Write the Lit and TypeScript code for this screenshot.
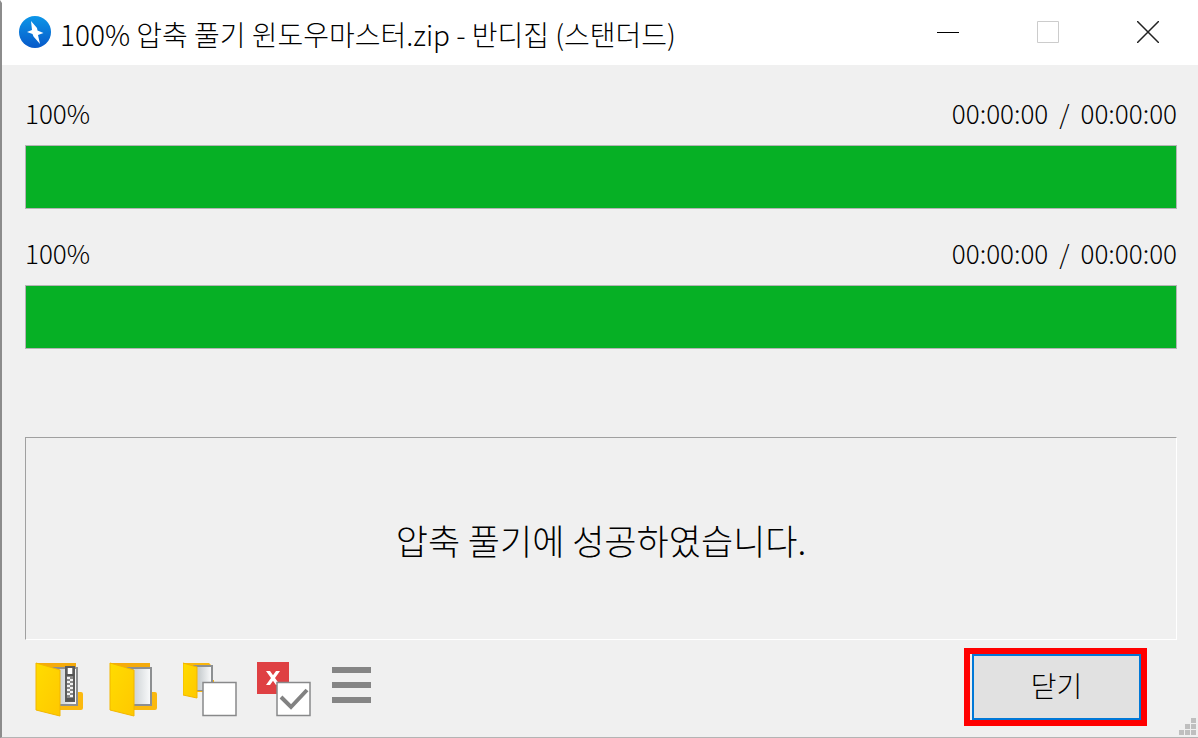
import { LitElement, html, css, svg } from "lit";
import { customElement, property } from "lit/decorators.js";

@customElement("progress-row")
class ProgressRow extends LitElement {
  @property({ type: Number }) value = 0;
  @property() elapsed = "";
  @property() total = "";

  static styles = css`
    :host { display: block; }
    .labels {
      display: flex;
      justify-content: space-between;
      height: 40px;
      line-height: 36px;
      font-size: 26px;
      margin-bottom: 10px;
    }
    .times { display: flex; gap: 11px; }
    .bar {
      display: block;
      appearance: none;
      box-sizing: border-box;
      width: 100%;
      height: 64px;
      border: 1px solid #b4b4b4;
      background: #e6e6e6;
    }
    .bar::-webkit-progress-bar { background: #e6e6e6; }
    .bar::-webkit-progress-value { background: #06b025; }
  `;

  render() {
    return html`
      <div class="labels">
        <label for="bar">${this.value}%</label>
        <div class="times"><span>${this.elapsed}</span><span>/</span><span>${this.total}</span></div>
      </div>
      <progress id="bar" class="bar" max="100" .value=${this.value}></progress>
    `;
  }
}

const folder = (content: unknown) => svg`
  <path d="M1 1h40v38h6a1 1 0 0 1 1 1v6H25z" fill="#f5ab0c"/>
  <path d="M41 30h5q2 0 2 2v14q0 2-2 2H24v-6h17z" fill="#fbb90f"/>
  <path d="M14 5h29v39H22z" fill="#8d8f91"/>
  <path d="M15 7h26v35H22z" fill="url(#paper)"/>
  ${content}
  <path d="M1 1 25 8v46L1 48z" fill="url(#cover)" stroke="#f2b600" stroke-width="1"/>
`;

const defs = svg`
  <defs>
    <linearGradient id="paper"><stop offset=".3" stop-color="#c9ced1"/><stop offset="1" stop-color="#f8f9fa"/></linearGradient>
    <linearGradient id="cover" x1="0" y1="0" x2="1" y2="1"><stop stop-color="#ffdc00"/><stop offset="1" stop-color="#ffc800"/></linearGradient>
  </defs>`;

const zipper = svg`
  <path d="M31 5h8v34h-8z" fill="#8a8a8a" stroke="#5b5b5b" stroke-width="2"/>
  <path d="M33 6h4v6h-4z" fill="#fff"/>
  <path d="M31 13h8" stroke="#555" stroke-width="2"/>
  <path d="M33.500 15v20" stroke="#f2f2f2" stroke-width="3" stroke-dasharray="2 2"/>
  <path d="M36.500 15v20" stroke="#f2f2f2" stroke-width="3" stroke-dasharray="2 2" stroke-dashoffset="2"/>
  <path d="M31 36h8v3h-8z" fill="#555"/>
`;

const tools = [
  {
    label: "압축 파일 열기",
    art: svg`<svg viewBox="0 0 56 56">${defs}${folder(zipper)}</svg>`,
  },
  {
    label: "폴더 열기",
    art: svg`<svg viewBox="0 0 56 56">${defs}${folder(null)}</svg>`,
  },
  {
    label: "완료 후 폴더 열기",
    art: svg`<svg viewBox="0 0 56 56">${defs}
      <path d="M0 1h26l2 2v15h3v12H14z" fill="#f9b60e"/>
      <path d="M10 3h20v26H14z" fill="#8d9092"/><path d="M11 5h17v23H14z" fill="url(#paper)"/>
      <path d="M0 1l14 4v31L0 33z" fill="url(#cover)" stroke="#f3b500"/>
      <rect x="20" y="20.500" width="33" height="33" fill="#fff" stroke="#88898a" stroke-width="1.500"/></svg>`,
  },
  {
    label: "완료 후 창 닫기",
    art: svg`<svg viewBox="0 0 56 56">
      <path d="M0 0h32v32H0z" fill="#df4043"/>
      <path d="M9 9h4l10 14h-4zM19 9h4L13 23H9z" fill="#fff"/>
      <rect x="20" y="20.500" width="33" height="33" fill="#fff" stroke="#88898a" stroke-width="1.500"/>
      <path d="M24 35l10 10 16-17" fill="none" stroke="#828282" stroke-width="4"/></svg>`,
  },
  {
    label: "메뉴",
    art: svg`<svg viewBox="0 0 56 56"><path d="M1 8h39M1 23h39M1 38h39" stroke="#858585" stroke-width="6"/></svg>`,
  },
];

@customElement("app-root")
class AppRoot extends LitElement {
  static styles = css`
    :host {
      display: block;
      color: #000;
      font-family: "Noto Sans CJK KR", sans-serif;
      font-weight: 300;
    }
    .window {
      box-sizing: border-box;
      min-height: 100vh;
      display: flex;
      flex-direction: column;
      position: relative;
      background: #f0f0f0;
      border-top: 3px solid #fff;
      border-left: 2px solid #8c8c8c;
      border-bottom: 1px solid #b4b4b4;
    }
    button { font: inherit; color: inherit; padding: 0; border: 0; background: none; }
    svg { display: block; }
    .titlebar {
      display: flex;
      align-items: center;
      box-sizing: border-box;
      height: 62px;
      padding: 0 0 4px 17px;
      background: #fff;
    }
    .logo { width: 32px; height: 32px; margin-right: 9px; }
    .title {
      flex: 1;
      margin: 0;
      padding-top: 4px;
      font-size: 28px;
      font-weight: 300;
      line-height: 32px;
      white-space: nowrap;
    }
    .caption { width: 100px; height: 58px; display: grid; place-items: center; }
    .caption svg { width: 22px; height: 22px; }
    .content {
      flex: 1;
      display: flex;
      flex-direction: column;
      padding: 30px 21px 0 23px;
    }
    .rows { display: grid; gap: 26px; }
    .result {
      flex: 1;
      display: grid;
      place-items: center;
      box-sizing: border-box;
      margin: 88px 0 0;
      padding-top: 2px;
      border: 1px solid #a0a0a0;
      border-right-color: #fff;
      border-bottom-color: #fff;
      font-size: 35px;
      line-height: 44px;
    }
    .footer {
      display: flex;
      align-items: flex-start;
      justify-content: space-between;
      padding: 8px 30px 11px 10px;
    }
    .tools { display: flex; gap: 18px; padding-top: 14px; }
    .tools svg { width: 56px; height: 56px; }
    .highlight { border: 6px solid #f00; padding-left: 2px; background: #f0f0f0; }
    .close {
      display: block;
      box-sizing: border-box;
      width: 169px;
      height: 66px;
      padding-bottom: 4px;
      border: 2px solid #0078d7;
      background: #e1e1e1;
      font-size: 28px;
    }
    .grip { position: absolute; right: 2px; bottom: 2px; width: 17px; height: 17px; }
  `;

  render() {
    return html`
      <main class="window">
        <header class="titlebar">
          <svg class="logo" viewBox="0 0 32 32" aria-hidden="true">
            <defs><linearGradient id="blue" x2="0" y2="1"><stop stop-color="#0c96e8"/><stop offset="1" stop-color="#0759c9"/></linearGradient></defs>
            <circle cx="16" cy="16" r="16" fill="url(#blue)"/>
            <path d="M12 5 18 12 18.500 14.500 24.500 17 19 19 21 28 14.500 20.500 13.500 18 8 16 13 14z" fill="#fff"/>
          </svg>
          <h1 class="title">100% 압축 풀기 윈도우마스터.zip - 반디집 (스탠더드)</h1>
          <button class="caption" aria-label="최소화"><svg viewBox="0 0 22 22"><path d="M0 11.500h22" stroke="#000"/></svg></button>
          <button class="caption" aria-label="최대화" disabled><svg viewBox="0 0 22 22"><path d="M.5.5h21v21H.5z" fill="none" stroke="#ccc"/></svg></button>
          <button class="caption" aria-label="창 닫기"><svg viewBox="0 0 22 22"><path d="M0 0l22 22M22 0L0 22" stroke="#222" stroke-width="1.500"/></svg></button>
        </header>
        <div class="content">
          <div class="rows">
            <progress-row value="100" elapsed="00:00:00" total="00:00:00"></progress-row>
            <progress-row value="100" elapsed="00:00:00" total="00:00:00"></progress-row>
          </div>
          <p class="result" role="status">압축 풀기에 성공하였습니다.</p>
          <footer class="footer">
            <div class="tools">
              ${tools.map((t) => html`<button aria-label=${t.label}>${t.art}</button>`)}
            </div>
            <div class="highlight"><button class="close">닫기</button></div>
          </footer>
        </div>
        <svg class="grip" viewBox="0 0 17 17" aria-hidden="true">
          <path d="M12 0h5v5h-5zM6 6h5v5H6zM12 6h5v5h-5zM0 12h5v5H0zM6 12h5v5H6zM12 12h5v5h-5z" fill="#bfbfbf"/>
        </svg>
      </main>
    `;
  }
}
